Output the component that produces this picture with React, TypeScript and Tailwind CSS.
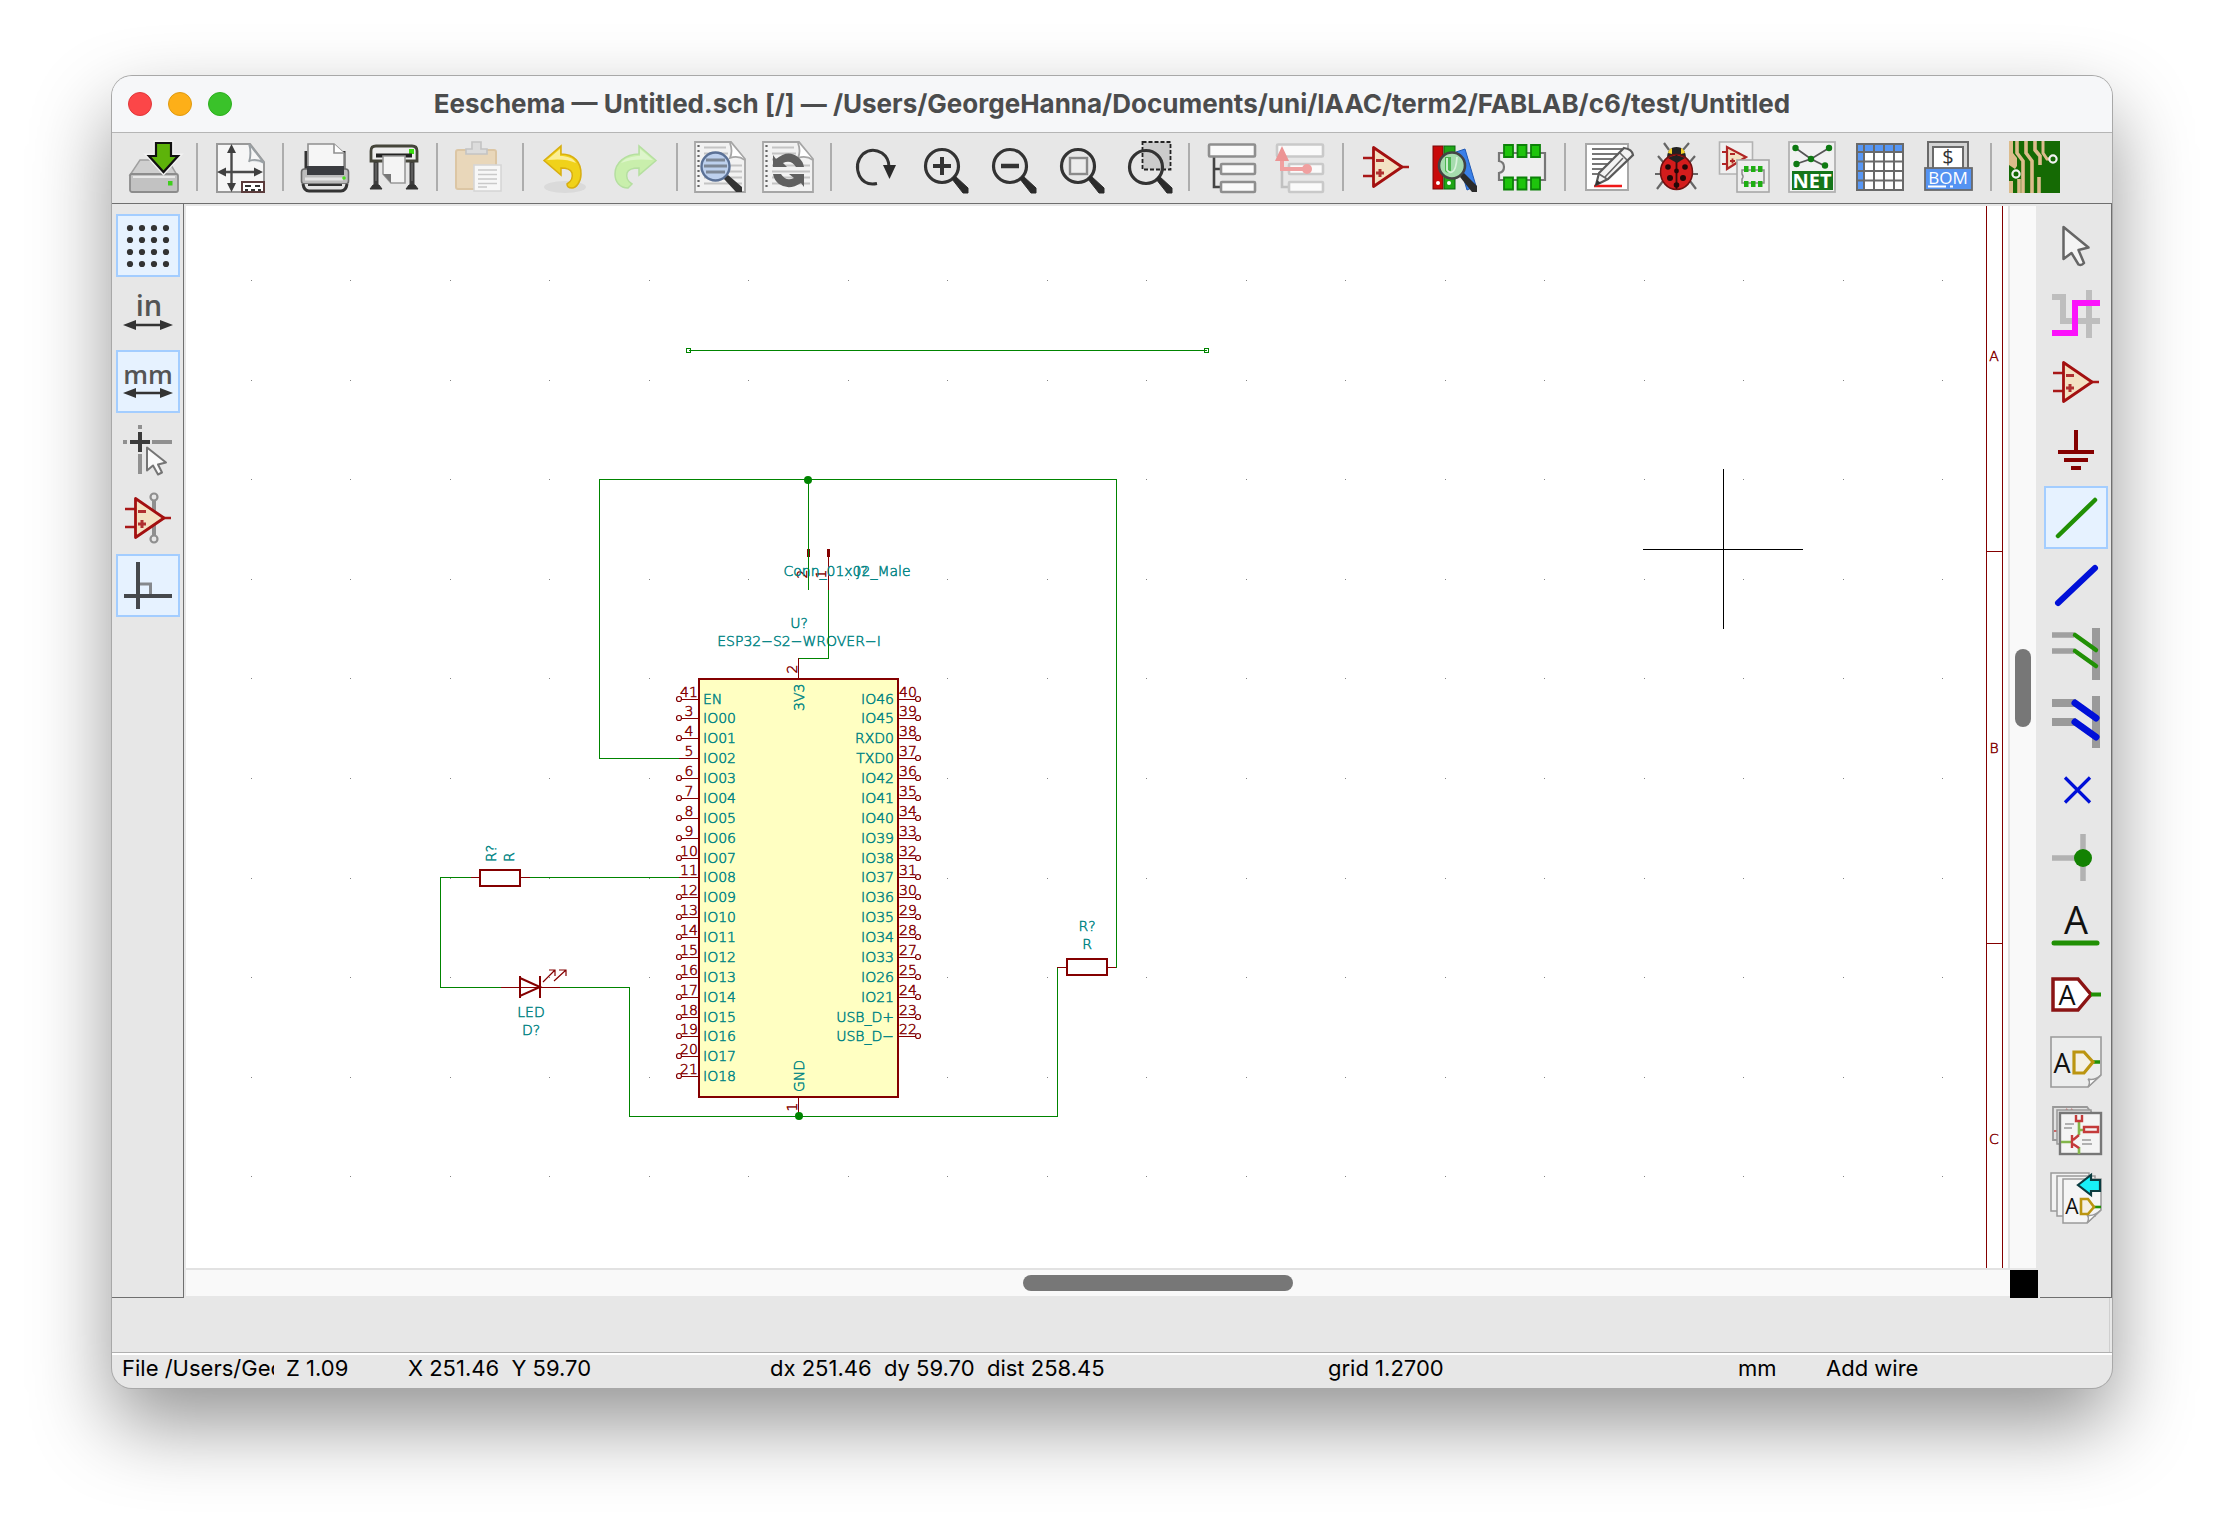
import type { ReactNode } from "react";

/* ---------- small building blocks ---------- */

function Icon({ children }: { children: ReactNode }) {
  return (
    <svg viewBox="0 0 52 52" className="size-[52px] shrink-0 overflow-visible" fill="none" aria-hidden="true">
      {children}
    </svg>
  );
}

function BarButton({ label, children, disabled }: { label: string; children: ReactNode; disabled?: boolean }) {
  return (
    <button type="button" aria-label={label} disabled={disabled} className="flex h-16 w-[68px] shrink-0 items-center justify-center">
      <Icon>{children}</Icon>
    </button>
  );
}

function SideButton({ label, active, children }: { label: string; active?: boolean; children: ReactNode }) {
  return (
    <button
      type="button"
      aria-label={label}
      aria-pressed={!!active}
      className={
        active
          ? "flex h-[63px] w-16 items-center justify-center border-2 border-[#a3cdff] bg-[#e6f2ff]"
          : "flex h-[63px] w-16 items-center justify-center border-2 border-transparent"
      }
    >
      <Icon>{children}</Icon>
    </button>
  );
}

function Separator() {
  return (
    <div className="flex w-[18px] shrink-0 justify-center">
      <div className="h-12 w-0.5 bg-[#adadad]" />
    </div>
  );
}

/* ---------- shared icon parts ---------- */

function OpAmp() {
  return (
    <>
      <path d="M3 17h10M3 35h10M41 26h8" stroke="#a81818" strokeWidth="2.600" />
      <path d="M13.500 6.500v39L42 26z" fill="#f3e2c3" stroke="#a31010" strokeWidth="2.800" strokeLinejoin="round" />
      <path d="M16 19.500h8M16 32h8M20 28v8" stroke="#b03030" strokeWidth="3" />
    </>
  );
}

function Cursor() {
  return (
    <path
      d="M13.500 7v32l8-6 7 11.500q3 1.500 5.500-1.500L28.500 30l10-2.500z"
      fill="#f4f4f4"
      stroke="#666"
      strokeWidth="2.500"
      strokeLinejoin="round"
    />
  );
}

function Lens({ y = 25, children }: { y?: number; children?: ReactNode }) {
  return (
    <>
      <circle cx="26" cy={y} r="16.500" stroke="#333" strokeWidth="3.200" />
      <path d="M36 38l3-3 13 12v5h-5z" fill="#2b2b2b" stroke="#2b2b2b" strokeWidth="1" />
      {children}
    </>
  );
}

function NotebookPage() {
  return (
    <>
      <path d="M1 1h36l14 17v33H1z" fill="#f2f2f2" stroke="#a6a6a6" strokeWidth="1.800" />
      <path d="M4.500 4v45" stroke="#666" strokeWidth="2.200" strokeDasharray="2 3" />
      <path d="M10 6.500h22M10 12.500h24M10 18.500h22M10 24.500h38M10 30.500h38M10 36.500h38M10 42.500h38" stroke="#c4c4c4" strokeWidth="1.800" />
      <path d="M36 2q3 8 0 15q8-3 15 2" fill="#fff" stroke="#a6a6a6" strokeWidth="1.800" />
    </>
  );
}

function DoubleArrow({ y }: { y: number }) {
  return (
    <>
      <path d={`M6 ${y}h40`} stroke="#333" strokeWidth="2.400" />
      <path d={`M1 ${y}l13-5v10zM51 ${y}l-13-5v10z`} fill="#333" />
    </>
  );
}

function Tree({ faded }: { faded?: boolean }) {
  return (
    <g stroke={faded ? "#c9c9c9" : "#8f8f8f"} strokeWidth="2.600" fill="#fafafa">
      <path d="M8 15v31h7M8 28h7" fill="none" stroke={faded ? "#c0c0c0" : "#444"} />
      <rect x="3" y="3.500" width="46" height="12" rx="1" />
      <rect x="15" y="23" width="34" height="10" rx="1" />
      <rect x="15" y="41" width="34" height="10" rx="1" />
    </g>
  );
}

/* ---------- top toolbar ---------- */

function TopToolbar() {
  return (
    <div role="toolbar" aria-label="Main" className="flex h-[71px] shrink-0 items-center overflow-hidden border-b border-[#6f6f6f] bg-[#e7e7e7] pb-0.5 pl-2">
      <BarButton label="Save">
        <path d="M12 19h28l9 15H2z" fill="#cfcfcf" stroke="#a0a0a0" strokeWidth="1.500" />
        <rect x="2" y="33" width="48" height="18" rx="2" fill="#c2c2c2" stroke="#8c8c8c" strokeWidth="1.800" />
        <path d="M5 36h42" stroke="#e8e8e8" strokeWidth="2" />
        <rect x="40" y="40" width="4.500" height="4.500" fill="#3fce1c" />
        <path d="M28 2h15v13h7L35.500 31 21 15h7z" fill="#5db30a" stroke="#f2f2f2" strokeWidth="5" />
        <path d="M28 2h15v13h7L35.500 31 21 15h7z" fill="#5db30a" stroke="#111" strokeWidth="2.200" />
      </BarButton>
      <Separator />
      <BarButton label="Page settings">
        <path d="M3 3h33l14 18v30H3z" fill="#f6f6f6" stroke="#999" strokeWidth="2" />
        <path d="M35 3q3 9 0 18M35 20q8-3 15 2M36 4l14 18" fill="#dde1e4" stroke="#9aa0a4" strokeWidth="1.800" />
        <path d="M17.500 8v40M8 31h38" stroke="#4a4a4a" strokeWidth="2.400" />
        <path d="M17.500 3l4.500 9h-9zM17.500 51l4.500-9h-9zM3 31l9-4.500v9zM49 31l-9-4.500v9z" fill="#3f3f3f" />
        <rect x="28" y="41" width="22" height="10" fill="#fff" stroke="#5b3c3c" strokeWidth="2" />
        <path d="M31 45h6M41 45h5M31 49h3M37 49h4M44 49h3" stroke="#333" strokeWidth="2" />
      </BarButton>
      <Separator />
      <BarButton label="Print">
        <path d="M6 10v20M44 10v20" stroke="#333" strokeWidth="3" />
        <path d="M8 3h26l10 9v18H8z" fill="#f6f6f6" stroke="#909090" strokeWidth="1.600" />
        <path d="M34 3v9h10" fill="#fff" stroke="#909090" strokeWidth="1.600" />
        <rect x="1.500" y="28" width="47" height="15" rx="3" fill="#bcbcbc" stroke="#6b6b6b" strokeWidth="1.600" />
        <rect x="7" y="25" width="37" height="9" fill="#3a3c40" />
        <path d="M5 38h38" stroke="#e4e4e4" strokeWidth="3" />
        <circle cx="44" cy="37" r="1.800" fill="#4be01e" />
        <path d="M3 43q1 7 6 7h32q5 0 6-7" stroke="#333" strokeWidth="3" fill="#e4e4e4" />
        <path d="M8 44h34" stroke="#333" strokeWidth="2" />
      </BarButton>
      <BarButton label="Plot">
        <path d="M8 20v26M44 20v26" stroke="#3c3c3c" strokeWidth="5" />
        <path d="M8 22v18M44 22v18" stroke="#666" strokeWidth="1.500" />
        <path d="M2 48h12l-3-4H5zM38 48h12l-3-4h-6z" fill="#333" stroke="#333" />
        <path d="M3 20V10q0-5 5-5h36q5 0 5 5v10z" fill="#ededed" stroke="#45453a" strokeWidth="2.800" />
        <rect x="41" y="8" width="5" height="5" fill="#3ade10" />
        <rect x="8" y="12.500" width="36" height="4" fill="#222" />
        <path d="M15 15h22v27H23l-8-9z" fill="#f4f4f4" stroke="#999" strokeWidth="1.600" />
        <path d="M15 33h8v9z" fill="#777" />
      </BarButton>
      <Separator />
      <BarButton label="Paste" disabled>
        <rect x="2" y="9" width="40" height="39" rx="2" fill="#e9d7ba" stroke="#dcc6a4" strokeWidth="2" />
        <path d="M12 13V8h6V1h9v7h6v5z" fill="#dcdcdc" stroke="#c4c4c4" strokeWidth="1.600" />
        <rect x="20" y="24" width="27" height="26" fill="#f7f7f7" stroke="#d6d6d6" strokeWidth="1.600" />
        <path d="M24 29h19M24 33.500h19M24 38h19M24 42.500h19M24 46h9" stroke="#c9c9c9" strokeWidth="1.500" />
      </BarButton>
      <Separator />
      <BarButton label="Undo">
        <ellipse cx="25" cy="46" rx="21" ry="6" fill="#dadada" />
        <path d="M4 19.500L21 5v8c14 0 20 9 20 20 0 8-5 14-9 14-3 0-5-1-5-4 5-3 6-7 5-11-1-3-4-5-11-5v7z" fill="#f0d21a" stroke="#d8ae10" strokeWidth="1.500" />
        <path d="M7 19L20 8v7c8 0 13 2 16 7-8-4-18-4-29-3z" fill="#fbee95" />
      </BarButton>
      <BarButton label="Redo" disabled>
        <path d="M48 19.500L31 5v8c-14 0-24 9-24 20 0 8 5 14 13 14l4-4c-5-3-6-7-5-11 1-3 5-5 12-5v7z" fill="#c9efac" stroke="#b5dfa0" strokeWidth="1.500" />
        <path d="M45 19L32 8v7c-8 0-15 2-19 7 9-4 21-4 32-3z" fill="#ddf5cb" />
      </BarButton>
      <Separator />
      <BarButton label="Find">
        <NotebookPage />
        <circle cx="21.500" cy="25.500" r="14" fill="#bdd0ee" stroke="#5b7196" strokeWidth="2.400" />
        <path d="M12 19h19M10 25h23M12 31h19" stroke="#7d8796" strokeWidth="3" />
        <path d="M30 38l4-4 14 12v5h-6z" fill="#333" />
      </BarButton>
      <BarButton label="Find and replace">
        <NotebookPage />
        <path d="M11 14l3 4q12-10 22-2 5 4 6 10h-8q-5-8-13-4l4 4H11z" fill="#606060" />
        <path d="M42 46l-3-4q-12 8-22 1-5-4-6-10h8q5 8 13 4l-5-4h15z" fill="#606060" />
      </BarButton>
      <Separator />
      <BarButton label="Refresh">
        <path d="M29 42.500Q17 45 11.500 35 6 22 15 13q9-7 19-1 7 5 7 14" stroke="#333" strokeWidth="3" />
        <path d="M35 24l13 0-6.500 14z" fill="#2b2b2b" />
      </BarButton>
      <BarButton label="Zoom in">
        <Lens>
          <path d="M17 25h18M26 16v18" stroke="#333" strokeWidth="4" />
        </Lens>
      </BarButton>
      <BarButton label="Zoom out">
        <Lens>
          <path d="M17 25h18" stroke="#333" strokeWidth="4.500" />
        </Lens>
      </BarButton>
      <BarButton label="Zoom to fit">
        <Lens>
          <rect x="18" y="17" width="17" height="16" fill="#ececec" stroke="#8a8a8a" strokeWidth="2.400" />
        </Lens>
      </BarButton>
      <BarButton label="Zoom to selection">
        <rect x="22.500" y="1" width="28" height="27.500" fill="#cbcbcb" stroke="#222" strokeWidth="1.800" strokeDasharray="4 2" />
        <Lens y={26} />
      </BarButton>
      <Separator />
      <BarButton label="Navigate hierarchy">
        <Tree />
      </BarButton>
      <BarButton label="Leave sheet" disabled>
        <Tree faded />
        <path d="M8 16v12h22" stroke="#f0a0a0" strokeWidth="4" />
        <path d="M8 5l7 15H1z" fill="#ec9494" />
        <circle cx="33" cy="28" r="5" fill="#f0a0a0" />
      </BarButton>
      <Separator />
      <BarButton label="Symbol editor">
        <OpAmp />
      </BarButton>
      <BarButton label="Symbol library browser">
        <rect x="5" y="5" width="10" height="43" fill="#c80a0a" stroke="#7b0808" />
        <rect x="16" y="5" width="11" height="43" fill="#1fa516" stroke="#0c6410" />
        <path d="M28 11l9-3 11 37-9 4z" fill="#3a80e8" stroke="#2059b4" />
        <circle cx="10" cy="42" r="2" fill="#fff" />
        <circle cx="21" cy="42" r="2" fill="#fff" />
        <circle cx="24" cy="24.500" r="13" fill="#a6dcae" stroke="#444" strokeWidth="2.600" />
        <path d="M17 16h6v15q-4 2-6-1z" fill="#4db552" />
        <path d="M19 17v12q2 3 5 2 4-1 5-15" stroke="#d9f2dc" strokeWidth="1.800" />
        <path d="M32 36l4-4 13 13v6h-5z" fill="#2b2b2b" />
      </BarButton>
      <BarButton label="Footprint editor">
        <path d="M3 12h46v27H3v-7q5-1 5-6t-5-6z" fill="#eee" stroke="#777" strokeWidth="2.200" />
        <path d="M8 4h9v12H8zM21.500 4h9v12h-9zM35 4h9v12h-9zM8 36.500h9v12H8zM21.500 36.500h9v12h-9zM35 36.500h9v12h-9z" fill="#1ec40c" stroke="#0c8208" strokeWidth="1.800" />
      </BarButton>
      <Separator />
      <BarButton label="Annotate schematic">
        <rect x="4" y="3" width="42" height="46" fill="#fff" stroke="#a8a8a8" strokeWidth="2" />
        <path d="M10 8h30M10 13h25M10 18h20M10 23h17M10 28h12M10 33h9" stroke="#777" strokeWidth="1.800" />
        <path d="M12 45h28" stroke="#f01818" strokeWidth="2.400" />
        <path d="M42 7q8 1 9 7L26 38l-12 6 3-12z" fill="#f3f3f3" stroke="#5a5a5a" strokeWidth="2.200" />
        <path d="M17 33l8 5M38 12l7 7M41 17L23 36" stroke="#666" strokeWidth="1.600" />
        <path d="M13 45l2-6 4 3z" fill="#333" />
      </BarButton>
      <BarButton label="Electrical rules check">
        <path d="M14 22L8 15M39 22l6-7M11 33H5M42 33h6M13 40l-6 8M40 40l6 8M19 9l-5-7M33 9l6-7" stroke="#666" strokeWidth="2.200" />
        <path d="M17 18q0-12 9.500-12T36 18z" fill="#222" />
        <path d="M18 12q1-4 4-5v6zM35 12q-1-4-4-5v6z" fill="#f3cf2c" />
        <ellipse cx="26.500" cy="31" rx="16" ry="17.500" fill="#d41c1c" stroke="#701010" strokeWidth="1.500" />
        <path d="M26.500 14v34" stroke="#3a0b0b" strokeWidth="1.800" />
        <path d="M18 17q8-5 17 0l-8 5z" fill="#222" />
        <g fill="#220808">
          <circle cx="18" cy="26" r="2.800" />
          <circle cx="35" cy="26" r="2.800" />
          <circle cx="20" cy="37" r="3" />
          <circle cx="33" cy="37" r="3" />
          <circle cx="26.500" cy="30" r="2.400" />
          <circle cx="26.500" cy="44" r="2.800" />
        </g>
      </BarButton>
      <BarButton label="Assign footprints">
        <path d="M1.500 1h33v32h-33z" fill="#f0f0f0" stroke="#b2b2b2" strokeWidth="1.600" />
        <path d="M9 6v22l19-12zM4 11h5M4 23h5" fill="#f3e2c3" stroke="#b02525" strokeWidth="2.200" />
        <path d="M12 13h5M12 20h5M14.500 17.500v5" stroke="#b02525" strokeWidth="1.800" />
        <rect x="19" y="19" width="32" height="32" fill="#ededed" stroke="#a8a8a8" strokeWidth="1.600" />
        <path d="M24 29h22v13H24v-4q2-2.500 0-5z" stroke="#8a8a8a" strokeWidth="1.500" />
        <path d="M26 25h4.500v6H26zM33 25h4.500v6H33zM40 25h4.500v6H40zM26 40h4.500v6H26zM33 40h4.500v6H33zM40 40h4.500v6H40z" fill="#1eae12" />
      </BarButton>
      <BarButton label="Generate netlist">
        <rect x="3" y="1" width="46" height="50" fill="#f1f1f1" stroke="#b2b2b2" strokeWidth="1.800" />
        <path d="M9.500 7L25 18 43 7M10 23l15-5 14 7" stroke="#555" strokeWidth="1.800" />
        <g fill="#0e7a12">
          <circle cx="9.500" cy="7" r="3.200" />
          <circle cx="43" cy="7" r="3.200" />
          <circle cx="25" cy="18" r="3.200" />
          <circle cx="10.500" cy="23" r="3.200" />
          <circle cx="39" cy="24.500" r="3.200" />
        </g>
        <rect x="6" y="30" width="41" height="19" fill="#15751a" />
        <text x="26" y="47" textAnchor="middle" fontFamily="Open Sans, sans-serif" fontSize="20" fontWeight="700" fill="#fff">NET</text>
      </BarButton>
      <BarButton label="Symbol fields table">
        <rect x="3" y="3" width="46" height="46" fill="#fff" />
        <path d="M3 3h46v8H3zM3 3h7v46H3z" fill="#5797f5" />
        <path d="M3 3h46v46H3zM10 3v46M20 3v46M30 3v46M40 3v46M3 11h46M3 20.500h46M3 30h46M3 39.500h46" stroke="#6a6a6a" strokeWidth="2" />
      </BarButton>
      <BarButton label="Bill of materials">
        <rect x="6" y="1" width="40" height="28" fill="#d4d4d4" stroke="#6a6a6a" strokeWidth="2" />
        <rect x="11" y="6" width="30" height="22" fill="#fff" stroke="#6a6a6a" strokeWidth="2" />
        <text x="26" y="23" textAnchor="middle" fontFamily="Open Sans, sans-serif" fontSize="20" fill="#333">$</text>
        <rect x="3" y="27" width="47" height="22" fill="#5593f2" stroke="#6a6a6a" strokeWidth="1.800" />
        <text x="26" y="43" textAnchor="middle" fontFamily="Open Sans, sans-serif" fontSize="17" fill="#fff">BOM</text>
        <path d="M6 45.500h18M28 45.500h3" stroke="#fff" strokeWidth="2" />
      </BarButton>
      <Separator />
      <BarButton label="Open PCB editor">
        <rect x="1" width="51" height="52" fill="#156a04" />
        <path d="M1 0h4v12l4 5v8l-2 3-6-4zM1 40h4v12H1z" fill="#dcbc8c" />
        <path d="M9 0v12l6 8v32M18 0v12l6 8v32M27 0v9l5 6v9M11 38v14M31 36v16" stroke="#dcbc8c" strokeWidth="3.600" />
        <path d="M35 0v12l4 6h2" stroke="#dcbc8c" strokeWidth="3" />
        <circle cx="45" cy="18" r="3.600" fill="#156a04" stroke="#f2f2f2" strokeWidth="2.200" />
        <circle cx="8" cy="33" r="3.600" fill="#156a04" stroke="#f2f2f2" strokeWidth="2.200" />
      </BarButton>
    </div>
  );
}

/* ---------- side toolbars ---------- */

const gridSteps = [8, 20, 32, 44];

function LeftToolbar() {
  return (
    <div role="toolbar" aria-label="Options" className="flex w-[72px] shrink-0 flex-col gap-[5px] border-r border-b border-[#6f6f6f] bg-[#e7e7e7] pt-2.5 pl-1">
      <SideButton label="Show grid" active>
        {gridSteps.map((y) => gridSteps.map((x) => <circle key={`${x}-${y}`} cx={x} cy={y} r="3.100" fill="#333" />))}
      </SideButton>
      <SideButton label="Inches">
        <text x="27" y="28" textAnchor="middle" fontFamily="Open Sans, sans-serif" fontSize="29" fontWeight="600" fill="#555">in</text>
        <DoubleArrow y={37} />
      </SideButton>
      <SideButton label="Millimetres" active>
        <text x="26" y="28" textAnchor="middle" fontFamily="Open Sans, sans-serif" fontSize="26" fontWeight="600" fill="#555">mm</text>
        <DoubleArrow y={37} />
      </SideButton>
      <SideButton label="Full-window crosshair">
        <path d="M18 1v4M18 30v20M1 18h4M30 18h20" stroke="#909090" strokeWidth="4" />
        <path d="M18 8v20M8 18h20" stroke="#3b3b3b" strokeWidth="4" />
        <path d="M25 23.500v23l6-5 5 9 4-2-4-8 8-2z" fill="#fafafa" stroke="#757575" strokeWidth="2" strokeLinejoin="round" />
      </SideButton>
      <SideButton label="Show hidden pins">
        <path d="M32 8v36" stroke="#8f8f8f" strokeWidth="4" />
        <circle cx="32" cy="5" r="3.500" stroke="#8f8f8f" strokeWidth="2.200" />
        <circle cx="32" cy="47" r="3.500" stroke="#8f8f8f" strokeWidth="2.200" />
        <OpAmp />
      </SideButton>
      <SideButton label="Orthogonal wires" active>
        <path d="M16 24h12.500v12" stroke="#85888c" strokeWidth="3" />
        <path d="M16 2v47M2 36h48" stroke="#45484c" strokeWidth="4" />
      </SideButton>
    </div>
  );
}

function RightToolbar() {
  return (
    <div role="toolbar" aria-label="Tools" className="ml-0.5 flex w-[72px] shrink-0 flex-col gap-[5px] border-r border-b border-[#6f6f6f] bg-[#e7e7e7] pt-2.5 pl-1">
      <SideButton label="Select">
        <Cursor />
      </SideButton>
      <SideButton label="Highlight net">
        <path d="M2 9h11v24h37M39 2v48" stroke="#bebebe" strokeWidth="6" />
        <path d="M2 45h23V15h25" stroke="#fb12fb" strokeWidth="6" />
      </SideButton>
      <SideButton label="Place symbol">
        <OpAmp />
      </SideButton>
      <SideButton label="Place power port">
        <path d="M26 6v22M8 28h36M14 36h24M21 44h10" stroke="#840000" strokeWidth="4" />
      </SideButton>
      <SideButton label="Add wire" active>
        <path d="M8 44L45 8" stroke="#219005" strokeWidth="4.500" strokeLinecap="round" />
      </SideButton>
      <SideButton label="Add bus">
        <path d="M8 43L45 8" stroke="#0010d8" strokeWidth="6" strokeLinecap="round" />
      </SideButton>
      <SideButton label="Wire to bus entry">
        <path d="M2 7h22M2 23h22" stroke="#a0a0a0" strokeWidth="5.500" />
        <path d="M46 0v52" stroke="#9a9a9a" strokeWidth="8" />
        <path d="M25 7l21 15M25 23l21 15" stroke="#219005" strokeWidth="4.500" strokeLinecap="round" />
      </SideButton>
      <SideButton label="Bus to bus entry">
        <path d="M2 7h24M2 26h24" stroke="#9a9a9a" strokeWidth="8" />
        <path d="M46 0v52" stroke="#9a9a9a" strokeWidth="8" />
        <path d="M25 7l21 15M25 26l21 15" stroke="#0010d8" strokeWidth="7" strokeLinecap="round" />
      </SideButton>
      <SideButton label="No connect">
        <path d="M15 13.500L40 38.500M40 13.500L15 38.500" stroke="#0010d8" strokeWidth="3.200" />
      </SideButton>
      <SideButton label="Add junction">
        <path d="M2 26h31M33 2v47" stroke="#b2b2b2" strokeWidth="5.500" />
        <circle cx="33" cy="26" r="9" fill="#138202" />
      </SideButton>
      <SideButton label="Add label">
        <text x="26" y="34" textAnchor="middle" fontFamily="Open Sans, sans-serif" fontSize="38" fontWeight="500" fill="#111">A</text>
        <path d="M4 43h43" stroke="#219005" strokeWidth="5" strokeLinecap="round" />
      </SideButton>
      <SideButton label="Add global label">
        <path d="M3 11h25l13 15.500L28 42H3z" fill="#fff" stroke="#8b1414" strokeWidth="3.500" />
        <path d="M41 26.500h10" stroke="#219005" strokeWidth="4" />
        <text x="17" y="37" textAnchor="middle" fontFamily="Open Sans, sans-serif" fontSize="27" fontWeight="500" fill="#111">A</text>
      </SideButton>
      <SideButton label="Add hierarchical label">
        <path d="M1 1h50v38L38 51H1z" fill="#eceded" stroke="#9a9a9a" strokeWidth="1.600" />
        <path d="M38 51q3-5 0-8 6 2 13-4z" fill="#fff" stroke="#9a9a9a" strokeWidth="1.500" />
        <path d="M43 26h7" stroke="#219005" strokeWidth="3.500" />
        <path d="M24 16h10l9 10-9 11H24z" fill="#f4f0e4" stroke="#bb9510" strokeWidth="3.200" />
        <text x="12" y="37" textAnchor="middle" fontFamily="Open Sans, sans-serif" fontSize="27" fontWeight="500" fill="#111">A</text>
      </SideButton>
      <SideButton label="Add sheet">
        <path d="M3 3h34l4 5v28H3z" fill="#e2e2e2" stroke="#999" strokeWidth="1.800" />
        <path d="M16 5l3 3M21 5l3 3M4 27h4" stroke="#c66" strokeWidth="1.800" />
        <path d="M7 6h34v34H7z" fill="#dedede" stroke="#999" strokeWidth="1.500" />
        <rect x="10" y="9" width="41" height="41" fill="#f4f4f4" stroke="#777" strokeWidth="2.400" />
        <path d="M29 17v14M29 43v7M11 38h10M29 26h5" stroke="#83b64a" strokeWidth="2.600" />
        <path d="M26 11v6h6v-6M34 23h14v5H34zM22 31v13M23 36l6-5M23 40l6 4" stroke="#c43a3a" strokeWidth="2.400" />
        <path d="M15 20h9M14 24h8M32 36h9M32 40h10" stroke="#9a9a9a" strokeWidth="1.500" />
      </SideButton>
      <SideButton label="Import sheet pin">
        <path d="M1 1h38v38H1z" fill="#f3f3f3" stroke="#9a9a9a" strokeWidth="1.500" />
        <path d="M7 4h38v40H7z" fill="#f3f3f3" stroke="#9a9a9a" strokeWidth="1.500" />
        <path d="M13 7h38v31L37 51H13z" fill="#f5f5f5" stroke="#9a9a9a" strokeWidth="1.500" />
        <path d="M37 51q3-5 0-8 6 2 14-5z" fill="#fff" stroke="#9a9a9a" strokeWidth="1.500" />
        <path d="M44 35h7" stroke="#219005" strokeWidth="2.600" />
        <path d="M31 27h7l6 8-6 7h-7z" fill="#f4f0e4" stroke="#bb9510" strokeWidth="2.600" />
        <text x="22" y="42" textAnchor="middle" fontFamily="Open Sans, sans-serif" fontSize="21" fontWeight="500" fill="#111">A</text>
        <path d="M28 13L41 3v5h9v11h-9v4z" fill="#18f0f8" stroke="#0b3c40" strokeWidth="2.200" />
      </SideButton>
    </div>
  );
}

/* ---------- schematic ---------- */

const leftPins = [
  ["41", "EN"], ["3", "IO00"], ["4", "IO01"], ["5", "IO02"], ["6", "IO03"], ["7", "IO04"], ["8", "IO05"],
  ["9", "IO06"], ["10", "IO07"], ["11", "IO08"], ["12", "IO09"], ["13", "IO10"], ["14", "IO11"], ["15", "IO12"],
  ["16", "IO13"], ["17", "IO14"], ["18", "IO15"], ["19", "IO16"], ["20", "IO17"], ["21", "IO18"],
];

const rightPins = [
  ["40", "IO46"], ["39", "IO45"], ["38", "RXD0"], ["37", "TXD0"], ["36", "IO42"], ["35", "IO41"], ["34", "IO40"],
  ["33", "IO39"], ["32", "IO38"], ["31", "IO37"], ["30", "IO36"], ["29", "IO35"], ["28", "IO34"], ["27", "IO33"],
  ["25", "IO26"], ["24", "IO21"], ["23", "USB_D+"], ["22", "USB_D−"],
];

const wired = ["5", "11"];
const pinY = (i: number) => Math.floor(699 + i * 19.88);
const gridX = Array.from({ length: 18 }, (_, i) => Math.floor(251 + i * 99.5));
const gridY = Array.from({ length: 10 }, (_, i) => Math.round(280 + i * 99.6));

const RED = "#840000";
const TEAL = "#008484";
const GREEN = "#008400";

type LabelProps = {
  x: number;
  y: number;
  color: string;
  anchor?: "start" | "middle" | "end";
  up?: boolean;
  children: string;
};

/* Thin pen-like lettering; `up` turns it to read bottom to top. */
function Label({ x, y, color, anchor = "middle", up, children }: LabelProps) {
  return (
    <text
      transform={up ? `translate(${x} ${y}) rotate(-90)` : `translate(${x} ${y})`}
      textAnchor={anchor}
      fill={color}
      stroke={color}
      strokeWidth="0.500"
    >
      {children}
    </text>
  );
}

function Schematic() {
  return (
    <svg
      role="img"
      aria-label="Schematic sheet"
      className="min-h-0 min-w-0 flex-1 bg-white font-['DejaVu_Sans'] text-[14px] font-extralight"
      fill="none"
    >
      <g transform="translate(-186 -206)">
        <g fill="#848484">
          {gridY.map((y) => gridX.map((x) => <rect key={`${x}-${y}`} x={x} y={y} width="1" height="1" />))}
        </g>

        {/* sheet frame */}
        <path d="M1986 206h1v1200h-1zM2002 206h1v1200h-1zM1986 551h16v1h-16zM1986 943h16v1h-16z" fill={RED} />
        <Label x={1994} y={361} color={RED}>A</Label>
        <Label x={1994} y={753} color={RED}>B</Label>
        <Label x={1994} y={1144} color={RED}>C</Label>

        {/* module body */}
        <rect x="699" y="679" width="199" height="418" fill="#ffffc2" stroke={RED} strokeWidth="2" shapeRendering="crispEdges" />

        {leftPins.map(([num, name], i) => (
          <g key={num}>
            <rect x={wired.includes(num) ? 679 : 682} y={pinY(i)} width={wired.includes(num) ? 20 : 17} height="1" fill={RED} />
            {!wired.includes(num) && <circle cx="679" cy={pinY(i)} r="2.500" stroke={RED} strokeWidth="1.200" />}
            <Label x={689} y={pinY(i) - 2} color={RED}>{num}</Label>
            <Label x={703} y={pinY(i) + 5} color={TEAL} anchor="start">{name}</Label>
          </g>
        ))}
        {rightPins.map(([num, name], i) => (
          <g key={num}>
            <rect x="899" y={pinY(i)} width="17" height="1" fill={RED} />
            <circle cx="918" cy={pinY(i)} r="2.500" stroke={RED} strokeWidth="1.200" />
            <Label x={908} y={pinY(i) - 2} color={RED}>{num}</Label>
            <Label x={894} y={pinY(i) + 5} color={TEAL} anchor="end">{name}</Label>
          </g>
        ))}

        {/* power pins and connector */}
        <path d="M798 658h1v21h-1zM798 1098h1v18h-1zM828 549h1v41h-1zM827 549h3v8h-3zM807 549h3v8h-3z" fill={RED} />
        <Label x={797} y={669} color={RED} up>2</Label>
        <Label x={797} y={1107} color={RED} up>1</Label>
        <Label x={804} y={711} color={TEAL} anchor="start" up>3V3</Label>
        <Label x={804} y={1092} color={TEAL} anchor="start" up>GND</Label>
        <Label x={807} y={574} color={RED} up>2</Label>
        <Label x={826} y={574} color={RED} up>1</Label>
        <Label x={847} y={576} color={TEAL}>Conn_01x02_Male</Label>
        <Label x={862} y={576} color={TEAL}>J?</Label>
        <Label x={799} y={628} color={TEAL}>U?</Label>
        <Label x={799} y={646} color={TEAL}>ESP32−S2−WROVER−I</Label>

        {/* resistors and LED */}
        <g stroke={RED} strokeWidth="2" shapeRendering="crispEdges">
          <rect x="480" y="870" width="40" height="16" />
          <rect x="1067" y="959" width="40" height="16" />
          <path d="M540 976v22M520 976v22" />
        </g>
        <path d="M520 978l20 9-20 9z" stroke={RED} strokeWidth="2" />
        <path d="M471 877h9v1h-9zM521 877h9v1h-9zM501 987h59v1h-59zM1057 967h9v1h-9zM1108 967h9v1h-9z" fill={RED} />
        <path d="M543 982l12-12M549 970h6v6M554 981l12-11M559 970h7v6" stroke={RED} strokeWidth="1.200" />
        <Label x={531} y={1017} color={TEAL}>LED</Label>
        <Label x={531} y={1035} color={TEAL}>D?</Label>
        <Label x={1087} y={931} color={TEAL}>R?</Label>
        <Label x={1087} y={949} color={TEAL}>R</Label>
        <Label x={496} y={862} color={TEAL} anchor="start" up>R?</Label>
        <Label x={514} y={862} color={TEAL} anchor="start" up>R</Label>

        {/* wires */}
        <g stroke={GREEN} strokeWidth="1" shapeRendering="crispEdges">
          <path d="M679 758.500H599.500V479.500H1116.500V967.500" />
          <path d="M808.500 479.500V590M828.500 590V658.500H798.500" />
          <path d="M679 877.500H530M471 877.500H440.500V987.500H501M560 987.500H629.500V1116.500H1057.500V967.500" />
          <path d="M688.500 350.500H1206.500" />
          <rect x="686.500" y="348.500" width="4" height="4" />
          <rect x="1204.500" y="348.500" width="4" height="4" />
        </g>
        <circle cx="808" cy="480" r="4" fill={GREEN} />
        <circle cx="799" cy="1116" r="4" fill={GREEN} />

        {/* cursor */}
        <path d="M1723 469h1v160h-1zM1643 549h160v1h-160z" fill="#000" />
      </g>
    </svg>
  );
}

function Workspace() {
  return (
    <div className="ml-0.5 flex min-w-0 flex-1 flex-col pt-0.5">
      <div className="flex min-h-0 flex-1">
        <Schematic />
        <div className="flex w-7 shrink-0 flex-col items-center border-l-2 border-[#e2e2e2] bg-[#f9f9f9]">
          <div className="flex-[443]" />
          <div className="h-[78px] w-4 rounded-full bg-[#777]" />
          <div className="flex-[541]" />
        </div>
        <div className="w-0.5 shrink-0" />
      </div>
      <div className="flex h-[30px] shrink-0">
        <div className="mb-0.5 flex flex-1 items-center border-t-2 border-[#e2e2e2] bg-[#f9f9f9]">
          <div className="flex-[837]" />
          <div className="h-4 w-[270px] rounded-full bg-[#777]" />
          <div className="flex-[717]" />
        </div>
        <div className="mt-0.5 size-7 bg-black" />
      </div>
    </div>
  );
}

/* ---------- window ---------- */

export default function App() {
  return (
    <div className="flex min-h-screen flex-col bg-white px-28 pt-[76px] pb-[148px]">
      <main className="flex flex-1 flex-col overflow-hidden rounded-[20px] bg-[#e7e7e7] shadow-[0_0_0_1px_#a8a8a8,0_36px_80px_rgba(0,0,0,0.42)]">
        <header className="flex h-[57px] shrink-0 items-center border-b border-[#b5b5b5] bg-[#f6f7f9] pl-4">
          <div className="flex w-28 gap-4">
            <button type="button" aria-label="Close" className="size-6 rounded-full border border-[#e0373a] bg-[#fc4648]" />
            <button type="button" aria-label="Minimise" className="size-6 rounded-full border border-[#df9a10] bg-[#fdaf18]" />
            <button type="button" aria-label="Zoom" className="size-6 rounded-full border border-[#2caf1e] bg-[#3ac22a]" />
          </div>
          <h1 className="flex-1 truncate pr-32 text-center font-['Inter'] text-[26px] leading-8 font-bold text-[#4b4c4d]">
            Eeschema — Untitled.sch [/] — /Users/GeorgeHanna/Documents/uni/IAAC/term2/FABLAB/c6/test/Untitled
          </h1>
        </header>
        <TopToolbar />
        <div className="flex min-h-0 flex-1">
          <LeftToolbar />
          <Workspace />
          <RightToolbar />
        </div>
        <div className="h-[55px] shrink-0 border-b border-[#b0b0b0] pr-0.5">
          <div className="h-full border-r border-[#cfcfcf]" />
        </div>
        <footer className="grid h-[35px] shrink-0 grid-cols-[164px_122px_362fr_558fr_410fr_88px_286fr] border-t-2 border-white pl-2.5 font-['Inter'] text-[22px] leading-[26px] whitespace-pre text-black">
          <span className="mr-3 overflow-hidden">File /Users/GeorgeHanna</span>
          <span>Z 1.09</span>
          <span>X 251.46  Y 59.70</span>
          <span>dx 251.46  dy 59.70  dist 258.45</span>
          <span>grid 1.2700</span>
          <span>mm</span>
          <span>Add wire</span>
        </footer>
      </main>
    </div>
  );
}
